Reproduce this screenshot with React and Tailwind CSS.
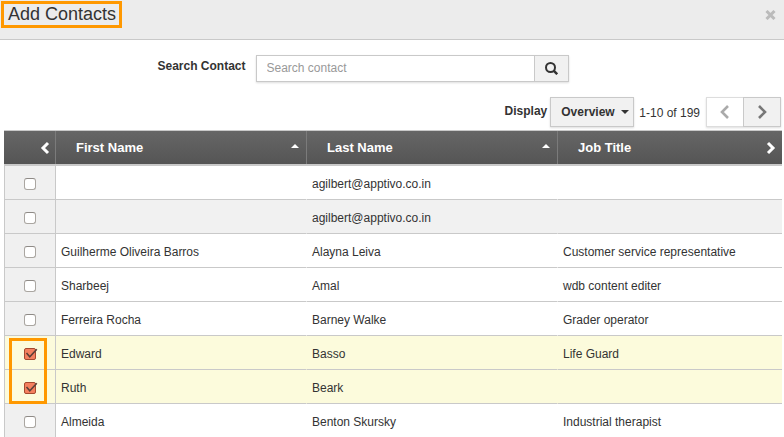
import { useState } from 'react'

const CONTACTS = [
  { id: 1, first: '', last: 'agilbert@apptivo.co.in', title: '' },
  { id: 2, first: '', last: 'agilbert@apptivo.co.in', title: '', shaded: true },
  { id: 3, first: 'Guilherme Oliveira Barros', last: 'Alayna Leiva', title: 'Customer service representative' },
  { id: 4, first: 'Sharbeej', last: 'Amal', title: 'wdb content editer' },
  { id: 5, first: 'Ferreira Rocha', last: 'Barney Walke', title: 'Grader operator' },
  { id: 6, first: 'Edward', last: 'Basso', title: 'Life Guard', marked: true },
  { id: 7, first: 'Ruth', last: 'Beark', title: '' },
  { id: 8, first: 'Almeida', last: 'Benton Skursky', title: 'Industrial therapist' },
]

function Chevron({ dir, className }) {
  return (
    <svg width="10" height="14" viewBox="0 0 10 14" fill="none" stroke="currentColor" className={className}>
      <path d={dir === 'left' ? 'M8 2L3 7l5 5' : 'M2 2l5 5-5 5'} />
    </svg>
  )
}

// Larger, flatter chevron used by the pager
function PagerChevron({ dir }) {
  return (
    <svg width="12" height="14" viewBox="0 0 12 14" fill="none" stroke="currentColor" strokeWidth="2.6">
      <path d={dir === 'left' ? 'M9 1L3 7l6 6' : 'M3 1l6 6-6 6'} />
    </svg>
  )
}

function SortArrow() {
  return (
    <svg width="8" height="4" viewBox="0 0 8 4" fill="currentColor">
      <path d="M0 4l4-4 4 4z" />
    </svg>
  )
}

function HeaderCell({ label, sortable, children }) {
  return (
    <th className="border-r border-[#7b7b7b] p-0 text-left last:border-r-0">
      <div className="flex h-[33px] items-center justify-between pr-[6px] pl-5">
        <span>{label}</span>
        {sortable && (
          <button aria-label={`Sort by ${label}`} className="cursor-pointer pr-px pb-1">
            <SortArrow />
          </button>
        )}
        {children}
      </div>
    </th>
  )
}

function RowCheckbox({ name, checked, onChange }) {
  return (
    <label className="relative block size-3">
      <input
        type="checkbox"
        aria-label={`Select ${name}`}
        checked={checked}
        onChange={onChange}
        className="block size-3 appearance-none rounded-[3px] border border-[#aaa6a1] border-t-[#8e8a86] bg-white checked:rounded-[2px] checked:border-[#a5492f] checked:bg-[#f4805f]"
      />
      {checked && (
        <svg width="14" height="12" viewBox="0 0 14 12" fill="none" className="pointer-events-none absolute top-0 left-0">
          <path d="M2.5 5l3.3 3.8L12.8 1.2" stroke="#5c4038" strokeWidth="1.6" />
        </svg>
      )}
    </label>
  )
}

function ContactRow({ contact, checked, onToggle }) {
  const bg = checked ? 'bg-[#fcfbdc]' : contact.shaded ? 'bg-[#f1f1f1]' : 'bg-white'
  const cell = 'truncate border-r border-b border-r-transparent border-b-[#c9c9c9] px-[5px] pt-[2px] pb-0 last:border-r-0'
  return (
    <tr className={`h-[34px] ${bg}`}>
      <td className={`relative border-x border-b border-[#c9c9c9] pt-[2px] pb-0 ${checked ? '' : 'bg-[#f0f0f0]'}`}>
        <div className="flex justify-center">
          <RowCheckbox name={contact.first || contact.last} checked={checked} onChange={onToggle} />
        </div>
        {contact.marked && (
          <div className="pointer-events-none absolute top-[2px] left-1 z-10 h-[66px] w-[38px] border-3 border-[#ff9800]" />
        )}
      </td>
      <td className={cell}>{contact.first}</td>
      <td className={cell}>{contact.last}</td>
      <td className={cell}>{contact.title}</td>
    </tr>
  )
}

export default function App() {
  const [query, setQuery] = useState('')
  const [selected, setSelected] = useState([6, 7])

  const toggle = (id) => {
    setSelected(s => (s.includes(id) ? s.filter(i => i !== id) : [...s, id]))
  }

  return (
    <div className="h-screen overflow-hidden bg-white font-['Liberation_Sans',Arial,sans-serif] text-xs text-[#333]">
      <header className="flex h-10 items-start justify-between border-b border-[#c9c9c9] bg-[#ececec] pt-px pr-2 pl-px">
        <h1 className="flex h-[27px] items-center border-3 border-[#ff9800] pr-[3px] pb-[2px] pl-1 text-[18px] leading-5">
          Add Contacts
        </h1>
        <button aria-label="Close" className="mt-[9px] cursor-pointer text-[#bbb]">
          <svg width="11" height="10" viewBox="0 0 11 10" fill="none" stroke="currentColor" strokeWidth="3">
            <path d="M1.5 1l8 8M9.5 1l-8 8" />
          </svg>
        </button>
      </header>

      <form className="flex items-start justify-center pt-[15px] pr-[58px]" onSubmit={(e) => e.preventDefault()}>
        <label htmlFor="search" className="mr-[10px] pt-[3px] leading-4 font-bold">Search Contact</label>
        <div className="flex h-[27px] shadow-[0_1px_2px_#ddd]">
          <input
            id="search"
            type="text"
            value={query}
            onChange={(e) => setQuery(e.target.value)}
            placeholder="Search contact"
            className="w-[278px] border border-r-0 border-[#c9c9c9] bg-white px-[10px] pb-px placeholder-[#999] focus:outline-none"
          />
          <button aria-label="Search" className="flex w-[35px] cursor-pointer items-center justify-center border border-[#c9c9c9] bg-[#f1f1f1]">
            <svg width="13" height="13" viewBox="0 0 13 13" fill="none" stroke="currentColor" strokeWidth="2">
              <circle cx="5.5" cy="5.5" r="4.5" />
              <path d="M8.6 8.6l3.6 3.6" strokeWidth="2.5" />
            </svg>
          </button>
        </div>
      </form>

      <div className="mt-[15px] flex h-[30px] items-center justify-end pr-[3px]">
        <label htmlFor="display" className="mr-[3px] pb-[3px] font-bold">Display</label>
        <div className="relative mr-[5px] h-[30px] shadow-[0_1px_2px_#ddd]">
          <select
            id="display"
            className="h-full w-[84px] cursor-pointer appearance-none border border-[#c9c9c9] bg-[#f1f1f1] pl-[10px] font-bold"
          >
            <option>Overview</option>
          </select>
          <svg width="8" height="4" viewBox="0 0 8 4" fill="currentColor" className="pointer-events-none absolute top-[13px] right-[5px]">
            <path d="M0 0h8L4 4z" />
          </svg>
        </div>
        <span className="mr-[6px] pt-px">1-10 of 199</span>
        <div className="flex h-[30px] shadow-[0_1px_2px_#ddd]">
          <button aria-label="Previous page" className="flex w-[37px] cursor-pointer items-center justify-center border border-r-0 border-[#ddd] bg-white text-[#aaa]">
            <PagerChevron dir="left" />
          </button>
          <button aria-label="Next page" className="flex w-[38px] cursor-pointer items-center justify-center border border-[#c9c9c9] bg-[#f1f1f1] text-[#777]">
            <PagerChevron dir="right" />
          </button>
        </div>
      </div>

      <div className="mt-[3px] pr-[2px] pl-1">
        <table className="w-full table-fixed border-separate border-spacing-0 border-t border-[#c9c9c9]">
          <colgroup>
            <col className="w-[52px]" />
            <col className="w-[251px]" />
            <col className="w-[251px]" />
            <col />
          </colgroup>
          <thead className="text-[13px] text-white">
            <tr className="bg-linear-to-b from-[#666] to-[#555]">
              <th className="border-r border-[#7b7b7b] p-0">
                <div className="flex h-[33px] items-center justify-end pr-[5px]">
                  <button aria-label="Scroll columns left" className="cursor-pointer">
                    <Chevron dir="left" className="stroke-3" />
                  </button>
                </div>
              </th>
              <HeaderCell label="First Name" sortable />
              <HeaderCell label="Last Name" sortable />
              <HeaderCell label="Job Title">
                <button aria-label="Scroll columns right" className="cursor-pointer">
                  <Chevron dir="right" className="stroke-3" />
                </button>
              </HeaderCell>
            </tr>
            <tr>
              <td colSpan={4} className="h-[2px] bg-[#c9c9c9] p-0" />
            </tr>
          </thead>
          <tbody>
            {CONTACTS.map(c => (
              <ContactRow
                key={c.id}
                contact={c}
                checked={selected.includes(c.id)}
                onToggle={() => toggle(c.id)}
              />
            ))}
          </tbody>
        </table>
      </div>
    </div>
  )
}
